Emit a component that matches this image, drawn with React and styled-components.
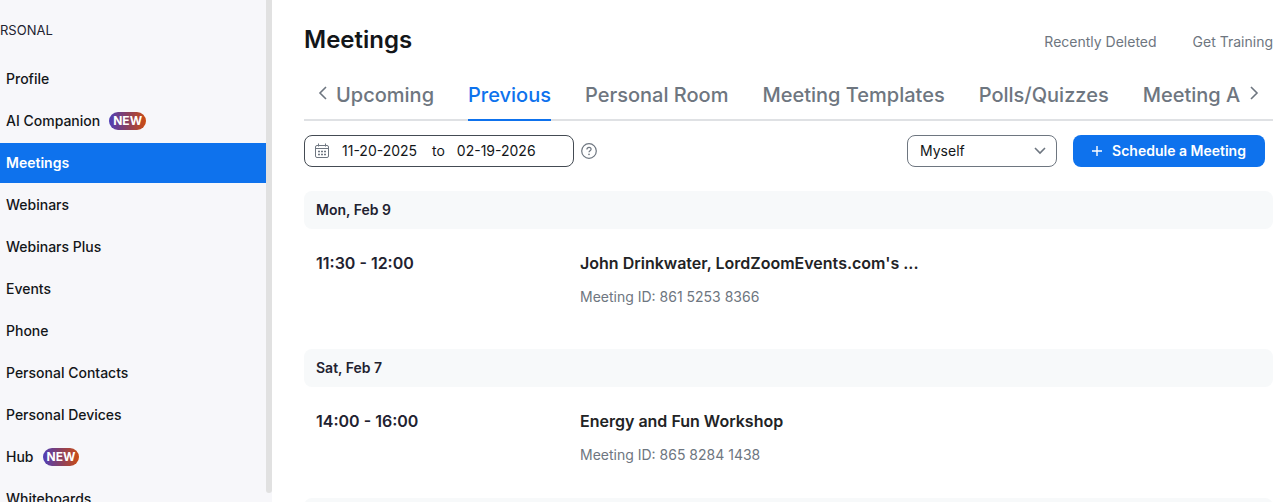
import React, { useState } from "react";
import styled, { createGlobalStyle } from "styled-components";

const menu = [
  { name: "Profile" },
  { name: "AI Companion", isNew: true },
  { name: "Meetings" },
  { name: "Webinars" },
  { name: "Webinars Plus" },
  { name: "Events" },
  { name: "Phone" },
  { name: "Personal Contacts" },
  { name: "Personal Devices" },
  { name: "Hub", isNew: true },
  { name: "Whiteboards" },
];

const tabs = [
  "Upcoming",
  "Previous",
  "Personal Room",
  "Meeting Templates",
  "Polls/Quizzes",
  "Meeting A",
];

const days = [
  {
    date: "Mon, Feb 9",
    time: "11:30 - 12:00",
    topic: "John Drinkwater, LordZoomEvents.com's ...",
    number: "861 5253 8366",
  },
  {
    date: "Sat, Feb 7",
    time: "14:00 - 16:00",
    topic: "Energy and Fun Workshop",
    number: "865 8284 1438",
  },
];

function CalendarIcon() {
  return (
    <svg width="16" height="16" viewBox="0 0 16 16" fill="none" stroke="#6e7680">
      <rect x="1.5" y="2.5" width="13" height="12" rx="1.5" />
      <path d="M1.5 5.5h13M4.5 0.5v3M11.5 0.5v3" />
      <path d="M4 8.5h2M7 8.5h2M10 8.5h2M4 11.5h2M7 11.5h2M10 11.5h2" strokeWidth="1.4" />
    </svg>
  );
}

function HelpIcon() {
  return (
    <svg width="16" height="16" viewBox="0 0 16 16" fill="none" stroke="#6e7680" strokeWidth="1.2">
      <circle cx="8" cy="8" r="7.3" />
      <path d="M5.9 6.4c0-1.3.9-2.1 2.1-2.1s2.1.8 2.1 1.9c0 1.5-2.1 1.6-2.1 3.1" />
      <circle cx="8" cy="11.4" r=".8" fill="#6e7680" stroke="none" />
    </svg>
  );
}

function Chevron({ d, width, height }) {
  return (
    <svg width={width} height={height} viewBox={`0 0 ${width} ${height}`} fill="none" stroke="currentColor" strokeWidth="1.6">
      <path d={d} />
    </svg>
  );
}

function App() {
  const [page, setPage] = useState("Meetings");
  const [tab, setTab] = useState("Previous");
  const [from, setFrom] = useState("11-20-2025");
  const [to, setTo] = useState("02-19-2026");

  return (
    <Layout>
      <GlobalStyle />
      <Sidebar>
        <Menu>
          <MenuTitle>RSONAL</MenuTitle>
          {menu.map((item) => (
            <MenuLink
              key={item.name}
              href="#"
              $active={page === item.name}
              onClick={() => setPage(item.name)}
            >
              {item.name}
              {item.isNew && <Badge>NEW</Badge>}
            </MenuLink>
          ))}
        </Menu>
        <ScrollThumb />
      </Sidebar>

      <Main>
        <Header>
          <Title>Meetings</Title>
          <HeaderLinks>
            <HeaderLink href="#">Recently Deleted</HeaderLink>
            <HeaderLink href="#">Get Training</HeaderLink>
          </HeaderLinks>
        </Header>

        <TabBar>
          <Arrow aria-label="Previous tabs">
            <Chevron width={10} height={14} d="M8 1L2 7l6 6" />
          </Arrow>
          <TabList role="tablist">
            {tabs.map((name) => (
              <Tab
                key={name}
                role="tab"
                aria-selected={tab === name}
                $active={tab === name}
                onClick={() => setTab(name)}
              >
                {name}
              </Tab>
            ))}
          </TabList>
          <Arrow aria-label="Next tabs">
            <Chevron width={10} height={14} d="M2 1l6 6-6 6" />
          </Arrow>
        </TabBar>

        <Toolbar>
          <DateRange>
            <CalendarIcon />
            <DateInput aria-label="Start date" value={from} onChange={(e) => setFrom(e.target.value)} />
            <span>to</span>
            <DateInput aria-label="End date" value={to} onChange={(e) => setTo(e.target.value)} />
          </DateRange>
          <HelpButton aria-label="Help">
            <HelpIcon />
          </HelpButton>
          <Spacer />
          <SelectBox>
            <Select aria-label="Host" defaultValue="Myself">
              <option>Myself</option>
            </Select>
            <Chevron width={12} height={8} d="M1 1l5 5 5-5" />
          </SelectBox>
          <ScheduleButton>
            <svg width="10" height="10" viewBox="0 0 10 10" stroke="currentColor" strokeWidth="1.4">
              <path d="M5 0v10M0 5h10" />
            </svg>
            Schedule a Meeting
          </ScheduleButton>
        </Toolbar>

        {days.map((day) => (
          <Day key={day.date}>
            <DayTitle>{day.date}</DayTitle>
            <Meeting>
              <Time>{day.time}</Time>
              <div>
                <Topic href="#">{day.topic}</Topic>
                <MeetingId>Meeting ID: {day.number}</MeetingId>
              </div>
            </Meeting>
          </Day>
        ))}
        <DayTitle as="div" />
      </Main>
    </Layout>
  );
}

const GlobalStyle = createGlobalStyle`
  * {
    box-sizing: border-box;
  }
  body {
    margin: 0;
    background: #fff;
    color: #131619;
    font-family: Inter, "Liberation Sans", sans-serif;
    font-size: 14px;
    line-height: 20px;
  }
  button, input, select {
    font: inherit;
    color: inherit;
  }
  button {
    padding: 0;
    border: none;
    background: none;
    cursor: pointer;
  }
  svg {
    display: block;
    flex: none;
  }
`;

const Layout = styled.div`
  display: flex;
  height: 100vh;
  overflow: hidden;
`;

const Sidebar = styled.nav`
  display: flex;
  flex: none;
  width: 272px;
  background: #f7f7fa;
`;

const Menu = styled.div`
  display: flex;
  flex: 1;
  flex-direction: column;
  gap: 2px;
  overflow: hidden;
`;

const MenuTitle = styled.div`
  flex: none;
  height: 57px;
  padding-top: 20px;
  color: #222230;
  font-size: 13px;
`;

const MenuLink = styled.a`
  display: flex;
  flex: none;
  align-items: center;
  gap: 9px;
  height: 40px;
  padding-left: 6px;
  background: ${(props) => (props.$active ? "#0e72ed" : "transparent")};
  color: ${(props) => (props.$active ? "#fff" : "#131619")};
  font-weight: ${(props) => (props.$active ? 600 : 500)};
  text-decoration: none;
`;

const Badge = styled.span`
  padding: 0 4px;
  border-radius: 9px;
  background: linear-gradient(90deg, #4f3fb8, #8a4060 50%, #cc4c12);
  color: #fff;
  font-size: 12px;
  font-weight: 700;
  line-height: 18px;
`;

const ScrollThumb = styled.div`
  width: 6px;
  margin-bottom: 9px;
  border-radius: 0 0 3px 3px;
  background: #e1e1e1;
`;

const Main = styled.main`
  flex: 1;
  min-width: 0;
  padding: 24px 12px 0 32px;
`;

const Header = styled.div`
  display: flex;
  justify-content: space-between;
`;

const Title = styled.h1`
  margin: 0;
  font-size: 24px;
  font-weight: 600;
  line-height: 32px;
`;

const HeaderLinks = styled.div`
  display: flex;
  gap: 36px;
  padding-top: 8px;
`;

const HeaderLink = styled.a`
  color: #6e7680;
  text-decoration: none;
`;

const TabBar = styled.div`
  display: flex;
  height: 53px;
  margin-top: 12px;
  padding: 0 14px;
  border-bottom: 2px solid #dfe1e4;
  color: #6e7680;
`;

const Arrow = styled.button`
  display: flex;
  align-items: center;
  height: 50px;
`;

const TabList = styled.div`
  display: flex;
  flex: 1;
  gap: 34px;
  height: 53px;
  margin: 0 8px;
  overflow: hidden;
`;

const Tab = styled.button`
  flex: none;
  height: 53px;
  padding-top: 2px;
  border-bottom: 2px solid ${(props) => (props.$active ? "#0e72ed" : "transparent")};
  color: ${(props) => (props.$active ? "#0e72ed" : "#6e7680")};
  font-size: 20px;
  font-weight: 500;
`;

const Toolbar = styled.div`
  display: flex;
  align-items: center;
  height: 32px;
  margin: 14px 8px 24px 0;
`;

const DateRange = styled.div`
  display: flex;
  align-items: center;
  width: 270px;
  height: 32px;
  padding-left: 9px;
  border: 1px solid #444b53;
  border-radius: 8px;
`;

const DateInput = styled.input`
  width: 102px;
  padding: 0 0 0 12px;
  border: none;
  outline: none;
  background: none;
`;

const HelpButton = styled.button`
  margin-left: 7px;
`;

const Spacer = styled.div`
  flex: 1;
`;

const SelectBox = styled.div`
  display: grid;
  align-items: center;
  width: 150px;
  height: 32px;
  margin-right: 16px;
  border: 1px solid #6e7680;
  border-radius: 8px;
  color: #6e7680;

  > * {
    grid-area: 1 / 1;
  }
  > svg {
    justify-self: end;
    margin-right: 10px;
    pointer-events: none;
  }
`;

const Select = styled.select`
  width: 100%;
  height: 30px;
  padding: 0 12px;
  border: none;
  border-radius: 8px;
  outline: none;
  appearance: none;
  background: none;
  color: #131619;
`;

const ScheduleButton = styled.button`
  display: flex;
  align-items: center;
  justify-content: center;
  gap: 10px;
  width: 192px;
  height: 32px;
  border-radius: 8px;
  background: #0e72ed;
  color: #fff;
  font-weight: 600;
`;

const Day = styled.section`
  padding-bottom: 42px;

  &:nth-last-child(2) {
    padding-bottom: 33px;
  }
`;

const DayTitle = styled.h2`
  height: 38px;
  margin: 0;
  padding: 0 12px;
  border-radius: 8px;
  background: #f7f9fa;
  color: #222230;
  font-size: 14px;
  font-weight: 600;
  line-height: 38px;
`;

const Meeting = styled.div`
  display: grid;
  grid-template-columns: 264px 1fr;
  padding: 24px 12px 0;
`;

const Time = styled.div`
  color: #222230;
  font-size: 16px;
  font-weight: 600;
`;

const Topic = styled.a`
  display: block;
  color: #222325;
  font-size: 16px;
  font-weight: 600;
  text-decoration: none;
`;

const MeetingId = styled.div`
  margin-top: 14px;
  color: #6e7680;
`;

export default App;
